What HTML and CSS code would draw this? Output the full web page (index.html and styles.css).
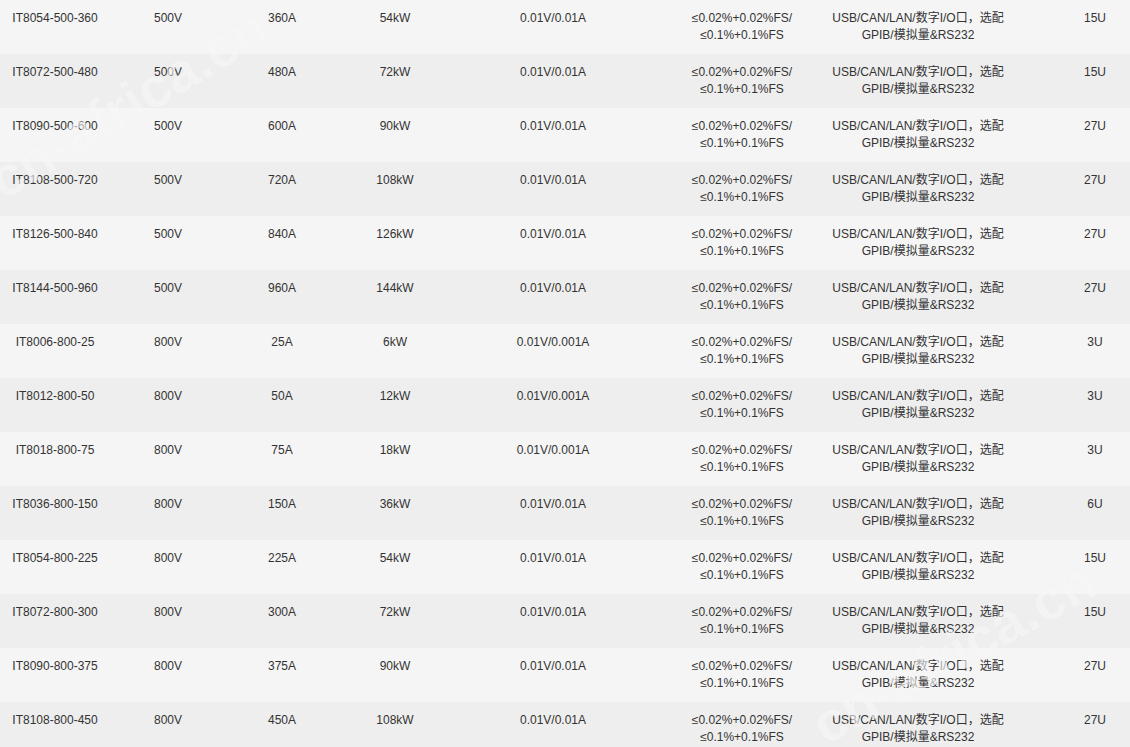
FILE: index.html
```html
<!DOCTYPE html>
<html lang="zh">
<head>
<meta charset="utf-8">
<title>IT8000 规格</title>
<link rel="stylesheet" href="styles.css">
</head>
<body>
<div class="wrap">
<table class="spec">
<colgroup>
<col class="c1"><col class="c2"><col class="c3"><col class="c4"><col class="c5"><col class="c6"><col class="c7"><col class="c8">
</colgroup>
<tbody>
<tr><td>IT8054-500-360</td><td>500V</td><td>360A</td><td>54kW</td><td>0.01V/0.01A</td><td>≤0.02%+0.02%FS/<br>≤0.1%+0.1%FS</td><td>USB/CAN/LAN/数字I/O口，选配<br>GPIB/模拟量&amp;RS232</td><td>15U</td></tr>
<tr><td>IT8072-500-480</td><td>500V</td><td>480A</td><td>72kW</td><td>0.01V/0.01A</td><td>≤0.02%+0.02%FS/<br>≤0.1%+0.1%FS</td><td>USB/CAN/LAN/数字I/O口，选配<br>GPIB/模拟量&amp;RS232</td><td>15U</td></tr>
<tr><td>IT8090-500-600</td><td>500V</td><td>600A</td><td>90kW</td><td>0.01V/0.01A</td><td>≤0.02%+0.02%FS/<br>≤0.1%+0.1%FS</td><td>USB/CAN/LAN/数字I/O口，选配<br>GPIB/模拟量&amp;RS232</td><td>27U</td></tr>
<tr><td>IT8108-500-720</td><td>500V</td><td>720A</td><td>108kW</td><td>0.01V/0.01A</td><td>≤0.02%+0.02%FS/<br>≤0.1%+0.1%FS</td><td>USB/CAN/LAN/数字I/O口，选配<br>GPIB/模拟量&amp;RS232</td><td>27U</td></tr>
<tr><td>IT8126-500-840</td><td>500V</td><td>840A</td><td>126kW</td><td>0.01V/0.01A</td><td>≤0.02%+0.02%FS/<br>≤0.1%+0.1%FS</td><td>USB/CAN/LAN/数字I/O口，选配<br>GPIB/模拟量&amp;RS232</td><td>27U</td></tr>
<tr><td>IT8144-500-960</td><td>500V</td><td>960A</td><td>144kW</td><td>0.01V/0.01A</td><td>≤0.02%+0.02%FS/<br>≤0.1%+0.1%FS</td><td>USB/CAN/LAN/数字I/O口，选配<br>GPIB/模拟量&amp;RS232</td><td>27U</td></tr>
<tr><td>IT8006-800-25</td><td>800V</td><td>25A</td><td>6kW</td><td>0.01V/0.001A</td><td>≤0.02%+0.02%FS/<br>≤0.1%+0.1%FS</td><td>USB/CAN/LAN/数字I/O口，选配<br>GPIB/模拟量&amp;RS232</td><td>3U</td></tr>
<tr><td>IT8012-800-50</td><td>800V</td><td>50A</td><td>12kW</td><td>0.01V/0.001A</td><td>≤0.02%+0.02%FS/<br>≤0.1%+0.1%FS</td><td>USB/CAN/LAN/数字I/O口，选配<br>GPIB/模拟量&amp;RS232</td><td>3U</td></tr>
<tr><td>IT8018-800-75</td><td>800V</td><td>75A</td><td>18kW</td><td>0.01V/0.001A</td><td>≤0.02%+0.02%FS/<br>≤0.1%+0.1%FS</td><td>USB/CAN/LAN/数字I/O口，选配<br>GPIB/模拟量&amp;RS232</td><td>3U</td></tr>
<tr><td>IT8036-800-150</td><td>800V</td><td>150A</td><td>36kW</td><td>0.01V/0.01A</td><td>≤0.02%+0.02%FS/<br>≤0.1%+0.1%FS</td><td>USB/CAN/LAN/数字I/O口，选配<br>GPIB/模拟量&amp;RS232</td><td>6U</td></tr>
<tr><td>IT8054-800-225</td><td>800V</td><td>225A</td><td>54kW</td><td>0.01V/0.01A</td><td>≤0.02%+0.02%FS/<br>≤0.1%+0.1%FS</td><td>USB/CAN/LAN/数字I/O口，选配<br>GPIB/模拟量&amp;RS232</td><td>15U</td></tr>
<tr><td>IT8072-800-300</td><td>800V</td><td>300A</td><td>72kW</td><td>0.01V/0.01A</td><td>≤0.02%+0.02%FS/<br>≤0.1%+0.1%FS</td><td>USB/CAN/LAN/数字I/O口，选配<br>GPIB/模拟量&amp;RS232</td><td>15U</td></tr>
<tr><td>IT8090-800-375</td><td>800V</td><td>375A</td><td>90kW</td><td>0.01V/0.01A</td><td>≤0.02%+0.02%FS/<br>≤0.1%+0.1%FS</td><td>USB/CAN/LAN/数字I/O口，选配<br>GPIB/模拟量&amp;RS232</td><td>27U</td></tr>
<tr><td>IT8108-800-450</td><td>800V</td><td>450A</td><td>108kW</td><td>0.01V/0.01A</td><td>≤0.02%+0.02%FS/<br>≤0.1%+0.1%FS</td><td>USB/CAN/LAN/数字I/O口，选配<br>GPIB/模拟量&amp;RS232</td><td>27U</td></tr>
</tbody>
</table>
<span class="wm wm-a">cn-africa.cn</span>
<span class="wm wm-b">cn-africa.cn</span>
</div>
</body>
</html>
```

FILE: styles.css
```css
html, body {
  margin: 0;
  padding: 0;
  background: #f5f5f5;
  overflow: hidden;
}
.wrap {
  position: relative;
  width: 1130px;
  height: 747px;
  overflow: hidden;
}
.spec {
  border-collapse: collapse;
  table-layout: fixed;
  width: 1184px;
  font-family: "Liberation Sans", Arial, "Noto Sans CJK SC", sans-serif;
  font-size: 12px;
  line-height: 17px;
  color: #333;
}
.c1 { width: 110px; }
.c2 { width: 116px; }
.c3 { width: 112px; }
.c4 { width: 114px; }
.c5 { width: 202px; }
.c6 { width: 176px; }
.c7 { width: 176px; }
.c8 { width: 178px; }
.spec td {
  padding: 10px 0;
  height: 34px;
  text-align: center;
  vertical-align: top;
  white-space: nowrap;
}
.spec tr:nth-child(odd) { background: #f5f5f5; }
.spec tr:nth-child(even) { background: #eeeeee; }
.wm {
  position: absolute;
  font-family: "Liberation Sans", Arial, sans-serif;
  font-weight: bold;
  font-size: 56px;
  line-height: 64px;
  color: rgba(255, 255, 255, 0.6);
  text-shadow: 0 0 1px rgba(0, 0, 0, 0.05);
  white-space: nowrap;
  transform-origin: 0 100%;
  pointer-events: none;
}
.wm-a {
  left: 10px;
  top: 148px;
  transform: rotate(-31deg);
}
.wm-b {
  left: 832px;
  top: 693px;
  transform: rotate(-29deg);
}
```
